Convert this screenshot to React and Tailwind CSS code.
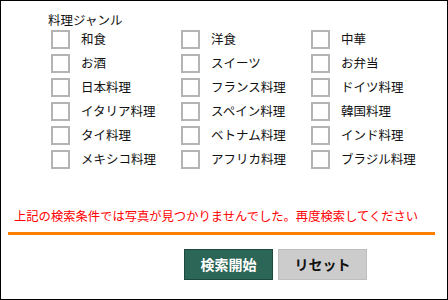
import React from 'react';

const GENRES = [
  '和食', '洋食', '中華',
  'お酒', 'スイーツ', 'お弁当',
  '日本料理', 'フランス料理', 'ドイツ料理',
  'イタリア料理', 'スペイン料理', '韓国料理',
  'タイ料理', 'ベトナム料理', 'インド料理',
  'メキシコ料理', 'アフリカ料理', 'ブラジル料理',
];

export default function App() {
  return (
    <div
      className="w-[448px] h-[300px] border border-black bg-white text-[#111] flex flex-col"
      style={{ fontFamily: '"Noto Sans CJK JP", "Noto Sans", sans-serif' }}
    >
      <div className="pl-[47px] pt-[10px] text-[12.5px] leading-[18px]">料理ジャンル</div>

      <div className="grid grid-cols-[130px_130px_130px] pl-[50px] mt-[-2px]">
        {GENRES.map(g => (
          <label key={g} className="flex items-center h-[24px]">
            <span className="w-[19px] h-[19px] border-2 border-[#b4b4b4] bg-white shrink-0" />
            <span className="ml-[11px] text-[12.5px] leading-[18px] whitespace-nowrap">{g}</span>
          </label>
        ))}
      </div>

      <div className="mt-[36px] pl-[13px] text-[12.3px] leading-[18px] text-[#ff0000] whitespace-nowrap">
        上記の検索条件では写真が見つかりませんでした。再度検索してください
      </div>
      <div className="ml-[7px] w-[427px] h-[3px] bg-[#ff8000] mt-[7px]" />

      <div className="flex gap-[5px] mt-[14px] pl-[183px]">
        <button className="w-[89px] h-[31px] bg-[#2b6657] border border-[#1c4a3f] text-white text-[14px] font-bold">
          検索開始
        </button>
        <button className="w-[89px] h-[31px] bg-[#cccccc] border border-[#bdbdbd] text-[#111] text-[14px] font-bold">
          リセット
        </button>
      </div>
    </div>
  );
}
